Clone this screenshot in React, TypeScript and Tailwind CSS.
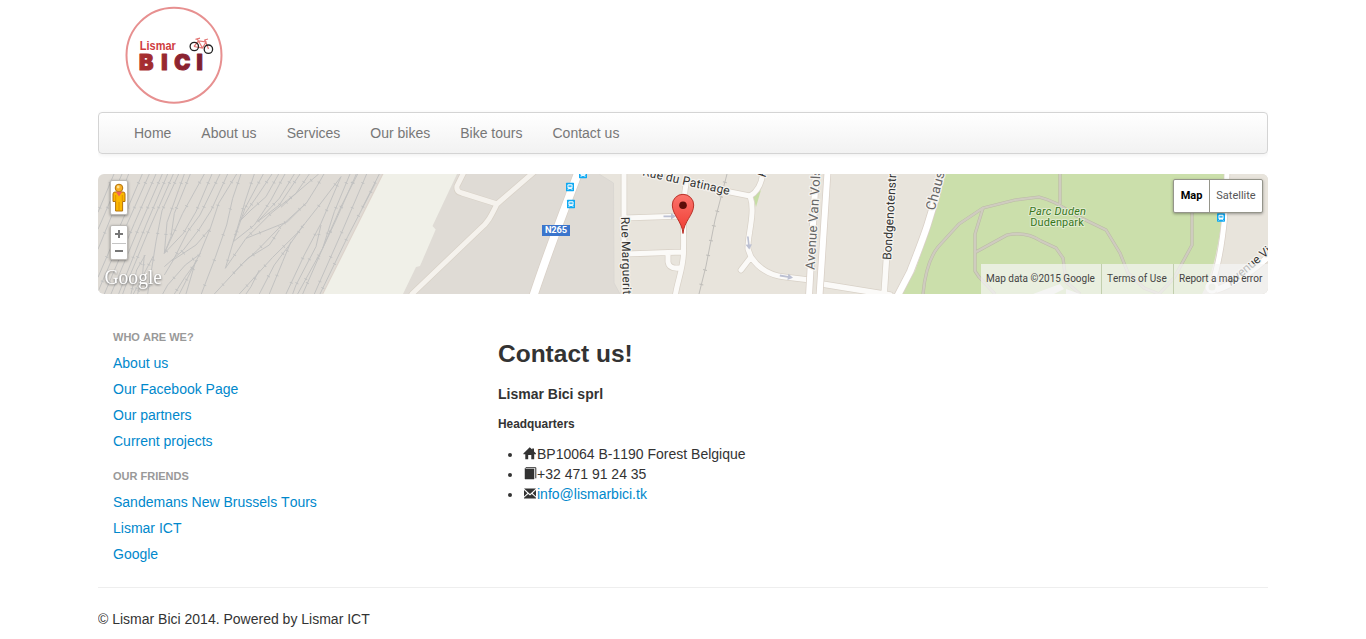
import React from "react";

const navItems = ["Home", "About us", "Services", "Our bikes", "Bike tours", "Contact us"];

const sideGroups = [
  { title: "Who are we?", links: ["About us", "Our Facebook Page", "Our partners", "Current projects"] },
  { title: "Our friends", links: ["Sandemans New Brussels Tours", "Lismar ICT", "Google"] },
];

const rails = [
  "M54 12 L6 127", "M78 12 L6 178", "M98 12 L6 238", "M139 12 L6 322", "M160 12 L92 165 L6 365",
  "M180 12 L115 160 L25 372", "M199 12 L130 170 L45 372", "M215 12 L150 165 L68 372", "M232 12 L165 165 L90 345 L80 372",
  "M248 12 L198 122 L180 215 L155 372", "M265 12 L213 157 L205 250", "M283 12 L235 130 L225 200 L205 250",
  "M325 12 L260 130 L205 250", "M348 12 L300 125 L262 190 L205 250",
  "M372 12 L312 135 L275 185 L232 270 L205 315", "M395 12 L345 122 L308 180 L262 240 L205 290", "M422 12 L368 100 L343 175 L312 250 L250 372",
  "M343 175 L300 225 L228 272", "M315 250 L268 285 L215 345 L200 372", "M305 270 L268 320 L235 372", "M300 270 L270 372",
  "M148 255 L122 300 L105 372", "M172 258 L150 300 L112 372", "M145 255 L140 310 L125 372",
  "M435 12 L410 85 L392 165 L358 262 L316 372", "M475 12 L447 95 L430 155 L412 215 L388 295",
  "M502 12 L447 115 L412 215", "M528 12 L488 72 L430 155", "M548 12 L510 80 L465 120 L430 155", "M567 12 L525 90 L475 165 L412 215",
  "M595 12 L550 85 L525 112 L485 155", "M612 12 L550 105 L485 155", "M640 12 L600 70 L555 112",
  "M668 12 L600 70 L525 130 L450 205 L388 295", "M684 12 L662 50 L632 98 L575 155 L450 205", "M632 98 L548 175 L485 240 L440 280 L355 372",
  "M735 20 L665 112 L605 188 L530 262 L430 372", "M735 20 L675 160 L625 255 L570 372", "M625 162 L580 225 L535 285 L490 372",
  "M585 215 L560 275 L520 372", "M490 300 L465 350 L450 372", "M550 180 L520 225 L455 265 L412 310",
  "M762 12 L715 125 L680 235 L620 372", "M785 12 L735 110 L680 235 L605 372", "M781 12 L720 150 L680 235", "M675 165 L660 230 L600 345 L590 372",
  "M812 12 L738 185 L655 372", "M838 40 L755 200 L672 372", "M850 12 L798 115",
];

const tram = [
  [583, 174],
  [570, 187],
  [571, 204],
  [1221, 217.5],
];

function Logo() {
  return (
    <svg width="100" height="102" viewBox="124 4 100 102" className="ml-[26px] block" aria-label="Lismar Bici">
      <defs>
        <linearGradient id="brand" gradientUnits="userSpaceOnUse" x1="139" x2="204" y1="0" y2="0">
          <stop offset="0" stopColor="#a92f30" />
          <stop offset="1" stopColor="#7d1d31" />
        </linearGradient>
      </defs>
      <circle cx="174" cy="55.2" r="47.5" fill="#fff" stroke="#e79090" strokeWidth="2" />
      <text x="139.8" y="50" fontFamily="Liberation Sans" fontWeight="700" fontSize="13" fill="#cf3d3f" textLength="36" lengthAdjust="spacingAndGlyphs">Lismar</text>
      <text x="139 161.3 174.3 196.4" y="70.4" fontFamily="Inter" fontWeight="900" fontSize="21.5" fill="url(#brand)" stroke="url(#brand)" strokeWidth="1.1" strokeLinejoin="round">BICI</text>
      <g fill="none">
        <g stroke="#e37674" strokeWidth="1.2">
          <path d="M194 46.5 L198.5 41 L206 42 L202.5 48 L194 46.5 M198.5 41 L202.5 48 M197 38.8 L198.5 41 M195.5 39.3 L200 38.2 M204.8 39.5 L208.5 49 M204 40.2 L208 39" />
        </g>
        <circle cx="194.3" cy="46.5" r="4.2" stroke="#222" strokeWidth="1.3" />
        <circle cx="208.4" cy="49.2" r="4.2" stroke="#222" strokeWidth="1.3" />
      </g>
    </svg>
  );
}

function MapDrawing() {
  const railPath = rails.join(" ");
  return (
    <svg width="1170" height="120" viewBox="98 174 1170 120" className="block" fontFamily="Roboto, sans-serif">
      <rect x="98" y="174" width="1170" height="120" fill="#dfdbd5" />
      {/* railway yard */}
      <g transform="translate(96 170) scale(.33333)" fill="none">
        <path d={railPath} stroke="#c2c2c1" strokeWidth="3" />
        <path d={railPath} stroke="#c0c1c1" strokeWidth="10" strokeDasharray="2.6 78" strokeDashoffset="-28" />
        <path d="M862 12 L682 372" stroke="#ddd3cb" strokeWidth="6" />
      </g>
      <path d="M383.5 174 L323.3 294 H403 L416 267 L420 266 L435.7 229.5 L432.5 226 L457 174Z" fill="#f0f0e8" />
      {/* built-up area */}
      <path d="M599 174 L613.5 183 L614 283 L620 294 H1268 V174Z" fill="#e8e4dc" />
      <path d="M599 174 L613.5 183 L614 283 L620 294" fill="none" stroke="#dad7d2" />
      {/* parks */}
      <path d="M944 174 C937 211 925 242 915 271 L901 294 H1202 C1216 270 1223 222 1226 174Z" fill="#cbdfab" />
      <path d="M761 190 L756 207 L753 196Z" fill="#c6dda5" />
      <g fill="none" stroke="#bbb9a6" strokeWidth="3.2" strokeLinejoin="round">
        <path d="M923 294 Q926 262 938 247 L959 224 L983 208 L1015 200 L1039 197 Q1058 202 1071 213 L1106 230 L1120 253 L1128 273 L1144 288 L1159 294 L1174 278 L1192 245 V206" />
        <path d="M983 208 L975 234 V271 L979 277 L995 294 M976 252 L1007 235 Q1026 231 1041 241 L1056 248 L1063 258 L1066 282 L1080 294 M1060 174 V204" />
      </g>
      <g fill="none" stroke="#cfccbf" strokeWidth="2.2" strokeLinejoin="round">
        <path d="M923 294 Q926 262 938 247 L959 224 L983 208 L1015 200 L1039 197 Q1058 202 1071 213 L1106 230 L1120 253 L1128 273 L1144 288 L1159 294 L1174 278 L1192 245 V206" />
        <path d="M983 208 L975 234 V271 L979 277 L995 294 M976 252 L1007 235 Q1026 231 1041 241 L1056 248 L1063 258 L1066 282 L1080 294 M1060 174 V204" />
      </g>
      <path d="M1033 294 L1060 284 L1064 289 L1054 294Z M1066 289 L1080 294 H1066Z" fill="#f2f2ee" />
      {/* railway through the quarter */}
      <path d="M727 174 L715 220 L706 266 L699 294" fill="none" stroke="#bfbdb9" strokeWidth="1" />
      <path d="M727 174 L715 220 L706 266 L699 294" fill="none" stroke="#bfbdb9" strokeWidth="4" strokeDasharray="1 14" strokeDashoffset="-8" />
      {/* minor streets */}
      {[
        { c: "#d8d1c7", w: 1.4 },
        { c: "#fbfaf8", w: 0 },
      ].map((s) => (
        <g key={s.c} fill="none" stroke={s.c} strokeLinecap="round" strokeLinejoin="round">
          <g strokeWidth={5 + s.w}>
            <path stroke={s.w ? s.c : "#f5f2ed"} d="M465 170 L457 186 Q456 192 462 193 L497 204 M534 172 L497 204 C492 214 488 223 480 229 L412 294" />
            <path d="M624 170 V294 M625 218 L683 216 M626 254 L682 252 M686 184 C682 206 684 225 683.5 250 C684 267 678 278 675 297 M668 254 V262 Q669 269 679 268" />
            <path d="M720 190 L750 196 Q761 190 763 172 M750 196 C756 212 747 237 748 249 L751 257 L741 270 M751 257 Q763 275 785 277 L810 280" />
            <path strokeWidth={5.6 + s.w} d="M822 284 L890 295 M887 250 L884 296" />
          </g>
        </g>
      ))}
      {/* main roads */}
      {[
        { c: "#d9d0c7", w: 1.5 },
        { c: "#ffffff", w: 0 },
      ].map((s) => (
        <g key={s.c} fill="none" stroke={s.c}>
          <path strokeWidth={8 + s.w} d="M580 168 C567 203 551 243 533 297" />
          <path strokeWidth={6 + s.w} d="M816 172 L809 296 M827.5 172 L819.5 296" />
          <path strokeWidth={6.5 + s.w} d="M942 172 C933 214 921 244 910 272 L897 297" />
          <path strokeWidth={5 + s.w} d="M1227 172 C1226 220 1222 257 1211 287" />
          <path strokeWidth={6 + s.w} d="M1216 290 Q1240 282 1268 257" />
        </g>
      ))}
      <circle cx="1212" cy="287" r="5" fill="#dfe4cf" stroke="#fff" strokeWidth="3" />
      {/* one-way arrows */}
      <g fill="#bcc0d2">
        <path d="M663.5 215.5 H671 V213.2 L676 216.3 L671 219.4 V217.2 H663.5Z" />
        <path d="M747 236.5 L748.7 236.4 L749.6 244.5 L752 244.2 L749.3 249.6 L745.6 244.8 L748 244.6Z" />
        <path d="M780 274.6 L788 276 L788.4 273.8 L793 277.8 L787.4 280 L787.8 277.8 L779.7 276.4Z" />
      </g>
      {tram.map(([x, y]) => (
        <g key={`${x}-${y}`} transform={`translate(${x} ${y})`}>
          <rect x="-4" y="-4.2" width="8" height="8.4" rx="0.6" fill="#0fa9f2" />
          <path d="M-2.4 3 L-1.2 1.6 H1.2 L2.4 3" stroke="#fff" fill="none" strokeWidth=".8" />
          <rect x="-2.5" y="-2.7" width="5" height="4.4" rx="1" fill="#fff" />
          <rect x="-1.6" y="-1.7" width="3.2" height="1.9" fill="#3bb7f3" />
        </g>
      ))}
      <rect x="542" y="225" width="28" height="11" fill="#3b75cc" />
      <text x="556" y="233.4" textAnchor="middle" fontSize="9.3" fontWeight="700" fill="#fff" textLength="22">N265</text>
      {/* street names */}
      <g fontSize="12" fill="#333" stroke="#f5f3ef" strokeWidth="2.5" strokeLinejoin="round" paintOrder="stroke">
        <text transform="translate(642 175.3) rotate(12.7)" textLength="89">Rue du Patinage</text>
        <text transform="translate(621 217) rotate(88.5)" textLength="84">Rue Marguerite</text>
        <text transform="translate(891 260) rotate(-86.5)" textLength="86">Bondgenotenstr</text>
        <g fill="#666">
          <text transform="translate(814.5 270) rotate(-86.5)" fontSize="13" textLength="101">Avenue Van Vols</text>
          <text transform="translate(934.5 211) rotate(-75)" fontSize="13.5" letterSpacing="0.4">Chaus</text>
        </g>
        <text transform="translate(765.3 178) rotate(-70)">R</text>
        <text transform="translate(1231 286) rotate(-40)">Avenue Vi</text>
        <g fill="#38761d" stroke="#e0ebcf" strokeWidth="2" fontSize="11" textAnchor="middle">
          <text x="1057.5" y="214.6" fontStyle="italic" textLength="57">Parc Duden</text>
          <text x="1057" y="226" textLength="53.5">Dudenpark</text>
        </g>
      </g>
      {/* pin */}
      <defs>
        <linearGradient id="pin" x1="0" x2="0" y1="0" y2="1">
          <stop offset="0" stopColor="#fb746c" />
          <stop offset="1" stopColor="#ef392f" />
        </linearGradient>
      </defs>
      <path d="M683 233.5 C682 221 672.3 215 672.3 205 A10.7 10.7 0 0 1 693.7 205 C693.7 215 684 221 683 233.5Z" fill="url(#pin)" stroke="#b93229" strokeWidth="1" />
      <circle cx="683" cy="205.3" r="3.8" fill="#5c0d08" />
      <text x="104.5" y="284" fontFamily="Liberation Serif, serif" fontSize="20" textLength="57.5" lengthAdjust="spacingAndGlyphs" fill="#fff" className="[filter:drop-shadow(0.5px_1px_0.8px_#666)]">Google</text>
    </svg>
  );
}

function Pegman() {
  return (
    <svg width="14" height="30" viewBox="0 0 14 30">
      <g stroke="#b3720c" strokeWidth="1">
        <path d="M3 9 H11 Q13 9 13 11 V18.5 H10.6 V28 H3.6 V18.5 H1 V11 Q1.1 9 3 9Z" fill="#fcb700" />
        <path d="M3.7 12 V18 M10.3 12 V18 M7 19 V27" fill="none" stroke="#dd9300" />
        <circle cx="7" cy="5" r="3.8" fill="#f8b126" />
      </g>
      <circle cx="6.2" cy="4" r="1.4" fill="#ffdf8e" />
      <path d="M3.8 8.8 H10.2 L7 13.4Z" fill="#ee6359" />
    </svg>
  );
}

function MapPanel() {
  return (
    <section className="relative mt-5 h-[120px] overflow-hidden rounded-md">
      <MapDrawing />
      <div className="absolute left-3 top-1.5 flex w-[18px] flex-col gap-2.5">
        <div className="flex h-[35px] items-center justify-center rounded-[2px] border border-[#bdbab6] bg-white shadow-[0_1px_3px_rgba(0,0,0,0.4)]">
          <Pegman />
        </div>
        <div className="flex h-[35px] flex-col rounded-[2px] border border-[#bdbab6] bg-white shadow-[0_1px_3px_rgba(0,0,0,0.4)]">
          <svg width="16" height="33" viewBox="0 0 16 33" stroke="#777" strokeWidth="2">
            <path d="M4 8 H12 M8 4 V12 M4 25 H12" />
            <path d="M1 17.5 H15" stroke="#c5c5c5" strokeWidth="1" />
          </svg>
        </div>
      </div>
      <div className="absolute right-[5px] top-[5px] flex h-[34px] rounded-[2px] border border-[#95958b] bg-white font-[Roboto,sans-serif] text-[11px] leading-[32px] shadow-[0_1px_3px_rgba(0,0,0,0.35)]">
        <div className="w-[36px] border-r border-[#95958b] text-center font-bold text-black">Map</div>
        <div className="w-[52px] text-center text-[#565656]">Satellite</div>
      </div>
      <div className="absolute bottom-0 right-0 flex h-[30px] bg-[#f5f5f5]/70 font-[Roboto,sans-serif] text-[10px] leading-[29px] text-[#444]">
        <div className="w-[120px] whitespace-nowrap pl-[5px]">Map data ©2015 Google</div>
        <div className="w-[72px] border-l border-[#c2cfae] pl-[5px]">Terms of Use</div>
        <div className="w-[95px] whitespace-nowrap border-l border-[#c2cfae] pl-[5px]">Report a map error</div>
      </div>
    </section>
  );
}

const icons: Record<string, React.ReactNode> = {
  home: <path d="M6.7 0.2 L9.2 2.6 V1.6 H11 V4.4 L13 6.6 V7.2 H11.2 V12.2 H8.3 V8 H5.2 V12.2 H2.3 V7.2 H0.4 V6.6Z" fill="#333" />,
  book: (
    <g>
      <path d="M3 0.7 H12.8 V11.3" fill="none" stroke="#333" strokeWidth="1" />
      <path d="M3 0.4 L2 1.6 V12 H11 V2 H2.5" fill="#333" stroke="#333" strokeWidth="0.5" />
    </g>
  ),
  envelope: (
    <g fill="#333">
      <path d="M1 1.6 H13 L7 6.9Z M1 3.1 L4.4 6.2 L1 9.4Z M13 3.1 V9.4 L9.6 6.2Z M1 11.6 V10.7 L5.2 7 L7 8.4 L8.8 7 L13 10.7 V11.6Z" />
    </g>
  ),
};

const contacts = [
  { icon: "home", text: "BP10064 B-1190 Forest Belgique" },
  { icon: "book", text: "+32 471 91 24 35" },
  { icon: "envelope", text: "info@lismarbici.tk", link: true },
];

export default function App() {
  return (
    <div className="mx-auto h-[639px] w-[1170px] overflow-hidden bg-white pt-1 font-['Liberation_Sans',Arial,sans-serif] text-sm leading-5 text-[#333] [font-kerning:none]">
      <Logo />
      <nav className="mt-1.5 flex h-[42px] items-center rounded border border-[#d4d4d4] bg-linear-to-b from-white to-[#f2f2f2] pl-5 shadow-[0_1px_4px_rgba(0,0,0,0.065)]">
        {navItems.map((item) => (
          <a key={item} href="#" className="px-[15px] text-[#777]">{item}</a>
        ))}
      </nav>
      <MapPanel />
      <main className="mt-[30px] flex">
        <aside className="w-[400px] px-[15px]">
          {sideGroups.map((group) => (
            <div key={group.title} className="mb-[9px]">
              <h2 className="py-[3px] text-[11px] font-bold uppercase text-[#999]">{group.title}</h2>
              {group.links.map((link) => (
                <a key={link} href="#" className="block py-[3px] text-[#0088cc]">{link}</a>
              ))}
            </div>
          ))}
        </aside>
        <article className="pt-2.5">
          <h1 className="text-[24.5px] font-bold leading-10">Contact us!</h1>
          <h2 className="mt-2.5 font-bold">Lismar Bici sprl</h2>
          <h3 className="mt-2.5 text-[11.9px] font-bold leading-5">Headquarters</h3>
          <ul className="ml-[25px] mt-2.5 list-disc">
            {contacts.map((c) => (
              <li key={c.icon} className="h-5">
                <svg width="14" height="14" viewBox="0 -1 14 14" className="inline-block align-text-top">{icons[c.icon]}</svg>
                {c.link ? <a href="#" className="text-[#0088cc]">{c.text}</a> : <span>{c.text}</span>}
              </li>
            ))}
          </ul>
        </article>
      </main>
      <footer className="mt-[11px] border-t border-[#eee] pt-[21px]">© Lismar Bici 2014. Powered by Lismar ICT</footer>
    </div>
  );
}
